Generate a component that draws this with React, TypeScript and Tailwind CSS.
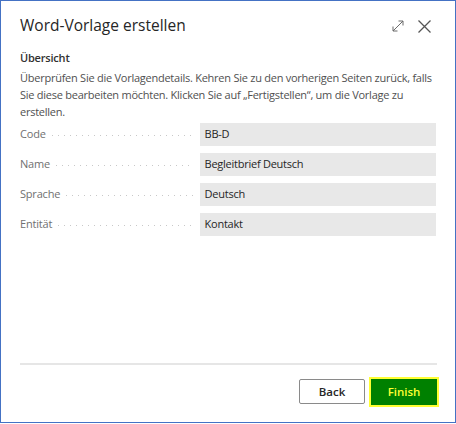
const rows = [
  { label: "Code", value: "BB-D" },
  { label: "Name", value: "Begleitbrief Deutsch" },
  { label: "Sprache", value: "Deutsch" },
  { label: "Entität", value: "Kontakt" },
];

const ExpandIcon = () => (
  <svg width="12" height="12" viewBox="0 0 12 12" fill="none" stroke="#6b6b6b" strokeWidth="1">
    <path d="M1 11 L11 1 M6.5 1 H11 V5.5 M1 6.5 V11 H5.5" />
  </svg>
);

const CloseIcon = () => (
  <svg width="13" height="13" viewBox="0 0 13 13" fill="none" stroke="#555" strokeWidth="1.3">
    <path d="M0.5 0.5 L12.5 12.5 M12.5 0.5 L0.5 12.5" />
  </svg>
);

export default function App() {
  return (
    <div
      className="w-[456px] h-[424px] bg-white"
      style={{ fontFamily: '"Segoe UI", "Open Sans", "Noto Sans", sans-serif' }}
    >
      <div className="w-[456px] h-[423px] border border-[#4472c4] flex flex-col">
        <div className="flex items-center justify-between pl-[19px] pr-[24px] pt-[8px] h-[42px]">
          <h1 className="text-[15.5px] text-[#262626]">Word-Vorlage erstellen</h1>
          <div className="flex items-center gap-[14px]">
            <ExpandIcon />
            <CloseIcon />
          </div>
        </div>

        <div className="px-[19px] pt-[6px] flex-1 flex flex-col">
          <h2 className="text-[11px] font-semibold text-[#323130] leading-[18px] tracking-[-0.2px]">Übersicht</h2>
          <p className="mt-[2px] text-[11px] text-[#505050] leading-[17px] tracking-[-0.25px] whitespace-nowrap">
            Überprüfen Sie die Vorlagendetails. Kehren Sie zu den vorherigen Seiten zurück, falls
            <br />
            Sie diese bearbeiten möchten. Klicken Sie auf „Fertigstellen“, um die Vorlage zu
            <br />
            erstellen.
          </p>

          <div className="mt-[3px] flex flex-col gap-[7px]">
            {rows.map((r) => (
              <div key={r.label} className="flex items-center h-[23px]">
                <div className="w-[180px] flex items-center text-[11px] text-[#707070] tracking-[-0.2px]">
                  <span>{r.label}</span>
                  <span className="flex-1 ml-[6px] mr-[7px] h-[1px] translate-y-[1px] bg-[repeating-linear-gradient(to_right,#c8c8c8_0_1px,transparent_1px_6px)]" />
                </div>
                <div className="w-[237px] h-[23px] bg-[#e8e8e8] flex items-center px-[5px] text-[11px] text-[#262626] tracking-[-0.25px]">
                  {r.value}
                </div>
              </div>
            ))}
          </div>

          <div className="mt-auto mb-[12px] h-[2px] bg-[#e6e6e6] w-[417px]" />
        </div>

        <div className="flex justify-end gap-[4px] pr-[16px] pb-[15px]">
          <button className="w-[66px] h-[25px] mt-[2px] border border-[#8a8a8a] rounded-[2px] bg-white text-[11.5px] font-semibold text-[#262626]">
            Back
          </button>
          <button className="w-[70px] h-[30px] border-2 border-[#ffff33] bg-[#008000] text-[11.5px] font-semibold text-[#ffff33]">
            Finish
          </button>
        </div>
      </div>
    </div>
  );
}
